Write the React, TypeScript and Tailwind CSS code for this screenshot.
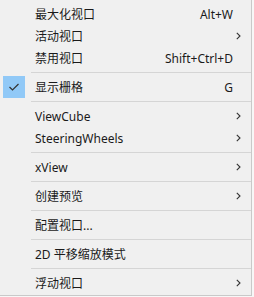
import React from "react";

type Item =
  | { type: "sep" }
  | { type: "item"; label: string; shortcut?: string; sub?: boolean; checked?: boolean };

const items: Item[] = [
  { type: "item", label: "最大化视口", shortcut: "Alt+W" },
  { type: "item", label: "活动视口", sub: true },
  { type: "item", label: "禁用视口", shortcut: "Shift+Ctrl+D" },
  { type: "sep" },
  { type: "item", label: "显示栅格", shortcut: "G", checked: true },
  { type: "sep" },
  { type: "item", label: "ViewCube", sub: true },
  { type: "item", label: "SteeringWheels", sub: true },
  { type: "sep" },
  { type: "item", label: "xView", sub: true },
  { type: "sep" },
  { type: "item", label: "创建预览", sub: true },
  { type: "sep" },
  { type: "item", label: "配置视口..." },
  { type: "sep" },
  { type: "item", label: "2D 平移缩放模式" },
  { type: "sep" },
  { type: "item", label: "浮动视口", sub: true },
];

function Chevron() {
  return (
    <svg width="5" height="8" viewBox="0 0 5 8" className="block">
      <path d="M0.8 0.8 L4 4 L0.8 7.2" fill="none" stroke="#333" strokeWidth="1.1" />
    </svg>
  );
}

function Check() {
  return (
    <svg width="12" height="10" viewBox="0 0 12 10" className="block">
      <path d="M1.5 5 L4.5 8 L10.5 2" fill="none" stroke="#333" strokeWidth="1.2" />
    </svg>
  );
}

export default function App() {
  return (
    <div className="w-[254px] h-[297px] bg-[#f7f7f7]">
      <div
        className="w-[252px] h-[296px] bg-[#f0f0f0] border-r border-b border-[#c9c9c9] pt-[3px] text-[12px] text-[#1a1a1a]"
        style={{ fontFamily: '"Noto Sans", "Noto Sans CJK SC", sans-serif' }}
      >
        {items.map((it, i) =>
          it.type === "sep" ? (
            <div key={i} className="h-[7px] flex items-center pl-[31px]">
              <div className="h-px w-full bg-[#d5d5d5]" />
            </div>
          ) : (
            <div key={i} className="h-[22px] flex items-center relative">
              <div className="w-[35px] h-[22px] flex items-center pl-[3px]">
                {it.checked && (
                  <div className="w-[22px] h-[22px] bg-[#91c9f7] flex items-center justify-center">
                    <Check />
                  </div>
                )}
              </div>
              <div className="flex-1 leading-none whitespace-nowrap pt-px">{it.label}</div>
              {it.shortcut && (
                <div className="leading-none whitespace-nowrap mr-[18px] pt-px">{it.shortcut}</div>
              )}
              {it.sub && (
                <div className="w-[5px] mr-[10px]">
                  <Chevron />
                </div>
              )}
            </div>
          )
        )}
      </div>
    </div>
  );
}
